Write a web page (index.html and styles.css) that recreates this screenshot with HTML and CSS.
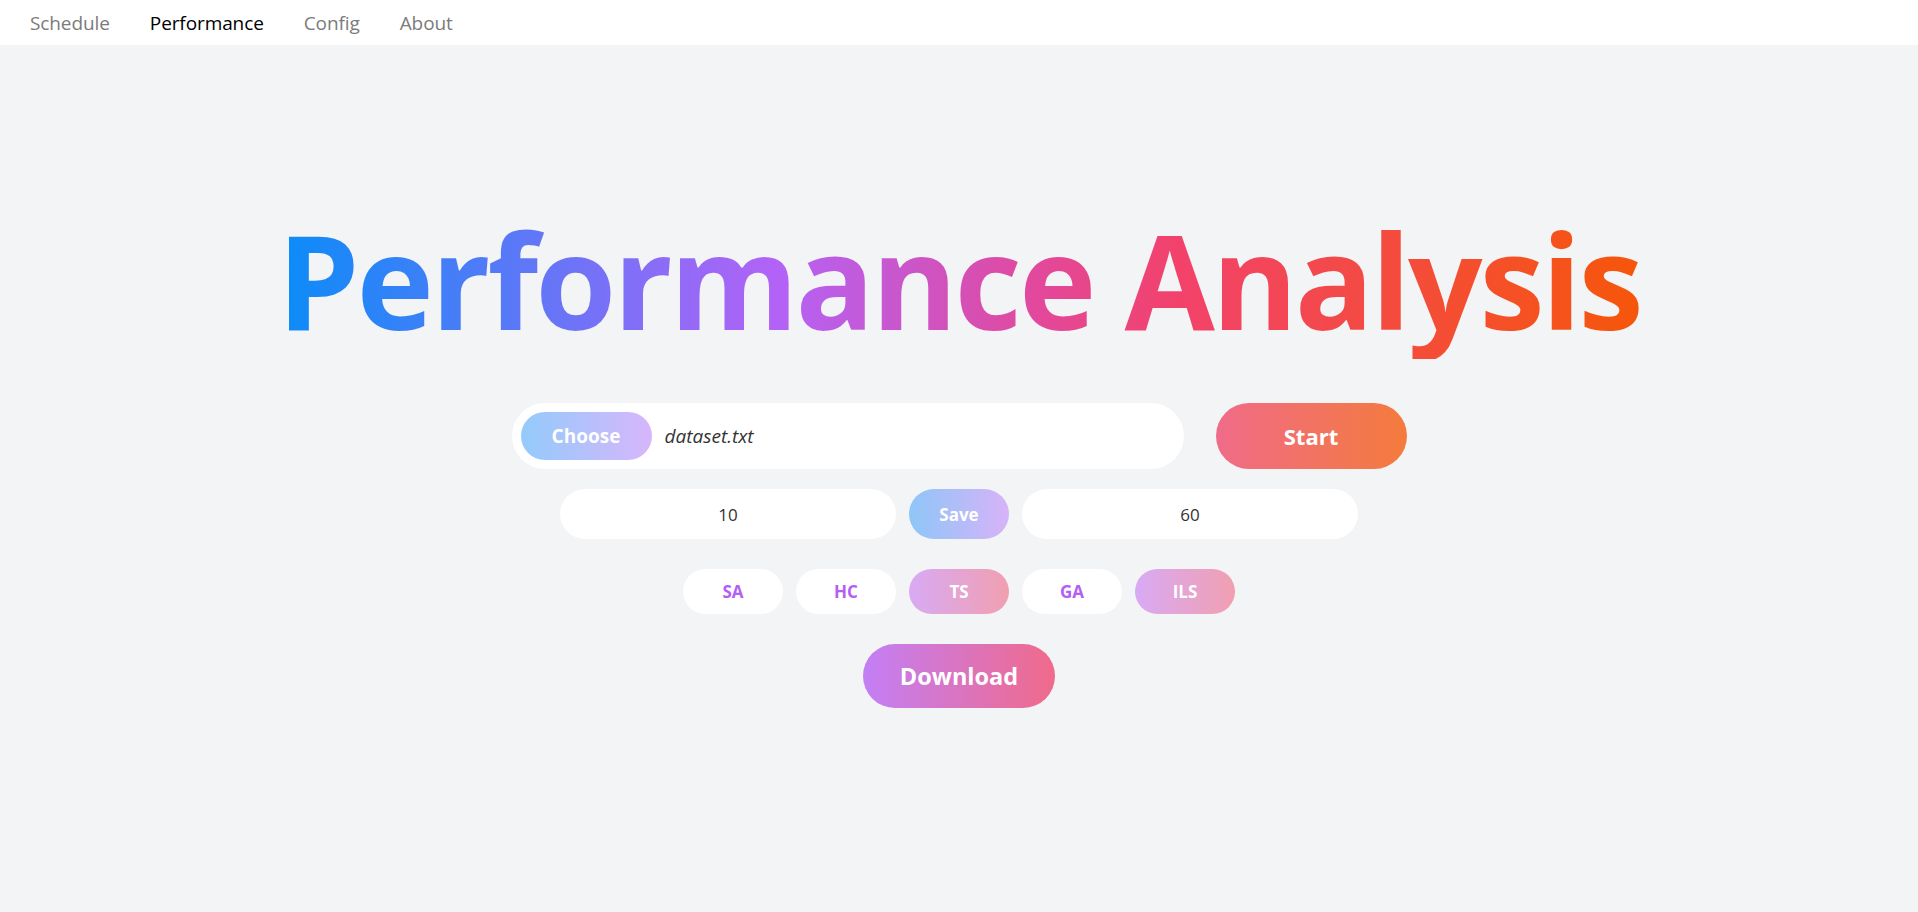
FILE: index.html
```html
<!DOCTYPE html>
<html lang="en">
<head>
<meta charset="utf-8">
<title>Performance Analysis</title>
<link rel="stylesheet" href="styles.css">
</head>
<body>
<nav class="nav">
  <a class="nav-link">Schedule</a>
  <a class="nav-link active">Performance</a>
  <a class="nav-link">Config</a>
  <a class="nav-link">About</a>
</nav>
<main class="main">
  <h1 class="title">Performance Analysis</h1>
  <div class="row row-file">
    <div class="file-box">
      <button class="btn-choose">Choose</button>
      <span class="file-name">dataset.txt</span>
    </div>
    <button class="btn-start">Start</button>
  </div>
  <div class="row row-params">
    <div class="param">10</div>
    <button class="btn-save">Save</button>
    <div class="param">60</div>
  </div>
  <div class="row row-chips">
    <span class="chip">SA</span>
    <span class="chip">HC</span>
    <span class="chip selected">TS</span>
    <span class="chip">GA</span>
    <span class="chip selected">ILS</span>
  </div>
  <div class="row row-download">
    <button class="btn-download">Download</button>
  </div>
</main>
</body>
</html>
```
FILE: styles.css
```css
* { box-sizing: border-box; }
html, body { margin: 0; padding: 0; }
body {
  background: #f3f4f6;
  font-family: "Open Sans", "Noto Sans", sans-serif;
  color: #333;
  min-height: 912px;
}
.nav {
  height: 45px;
  background: #fff;
  display: flex;
  align-items: center;
  padding-left: 10px;
}
.nav-link {
  padding: 0 20px;
  font-size: 19px;
  color: #7b7b7b;
  letter-spacing: -0.1px;
}
.nav-link.active { color: #000; }
.main {
  display: flex;
  flex-direction: column;
  align-items: center;
}
.title {
  margin: 154px 0 0 0;
  font-size: 131px;
  line-height: 160px;
  height: 160px;
  font-weight: 700;
  letter-spacing: -3px;
  background: linear-gradient(90deg, #0a8cf8 0%, #b462f6 37%, #e3489a 56%, #f2426b 66%, #f6560a 100%);
  -webkit-background-clip: text;
  background-clip: text;
  color: transparent;
  white-space: nowrap;
}
.row { display: flex; align-items: center; justify-content: center; }
.row-file { margin-top: 44px; gap: 32px; }
.file-box {
  width: 672px;
  height: 66px;
  background: #fff;
  border-radius: 33px;
  padding: 9px;
  display: flex;
  align-items: center;
  gap: 13px;
}
button { border: none; font-family: inherit; cursor: pointer; color: #fff; font-weight: 700; }
.btn-choose {
  width: 131px;
  height: 48px;
  border-radius: 24px;
  background: linear-gradient(90deg, #93cbfb, #d7b6fb);
  font-size: 19px;
}
.file-name {
  font-style: italic;
  font-size: 19px;
  color: #333;
}
.btn-start {
  width: 191px;
  height: 66px;
  border-radius: 33px;
  background: linear-gradient(90deg, #f06b88, #f47b3c);
  font-size: 22px;
}
.row-params { margin-top: 20px; gap: 13px; }
.param {
  width: 336px;
  height: 50px;
  border-radius: 25px;
  background: #fff;
  display: flex;
  align-items: center;
  justify-content: center;
  font-size: 17px;
  color: #333;
}
.btn-save {
  width: 100px;
  height: 50px;
  border-radius: 25px;
  background: linear-gradient(90deg, #8ec6f8, #d7b3f8);
  font-size: 17px;
}
.row-chips { margin-top: 30px; gap: 13px; }
.chip {
  width: 100px;
  height: 45px;
  border-radius: 23px;
  background: #fff;
  display: flex;
  align-items: center;
  justify-content: center;
  font-size: 17px;
  font-weight: 700;
  color: #b35ef5;
}
.chip.selected {
  background: linear-gradient(90deg, #d8aaf4, #f19fb0);
  color: #fff;
}
.row-download { margin-top: 30px; }
.btn-download {
  width: 192px;
  height: 64px;
  border-radius: 32px;
  background: linear-gradient(90deg, #c37ff6, #f06a8a);
  font-size: 23.5px;
}
```
